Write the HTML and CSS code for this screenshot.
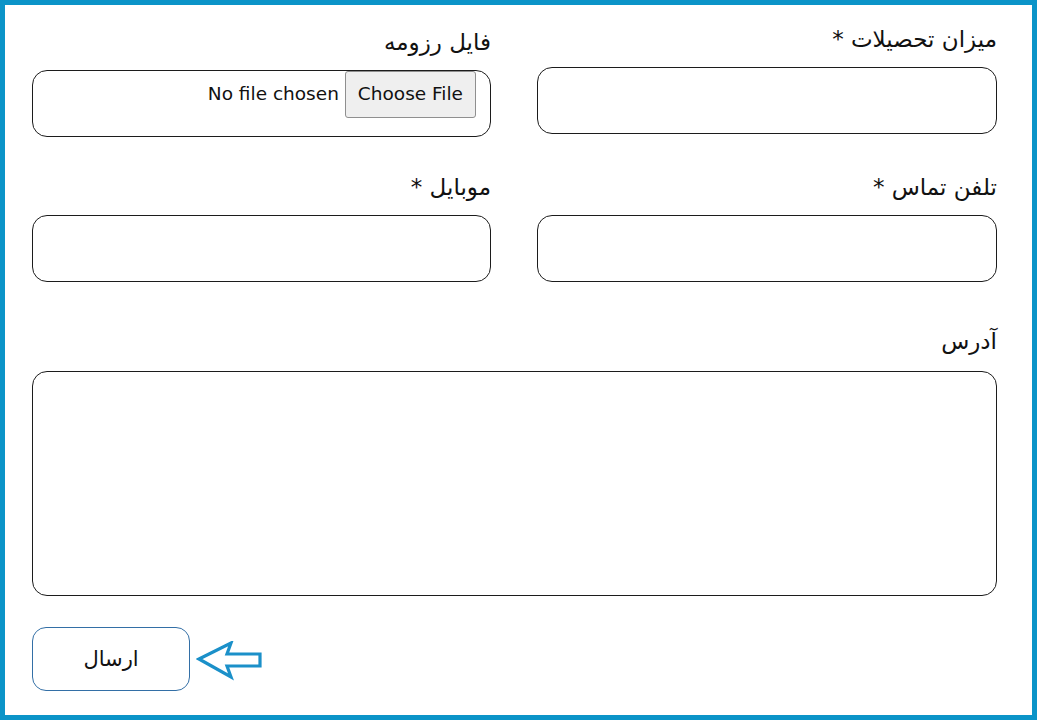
FILE: index.html
```html
<!DOCTYPE html>
<html lang="fa">
<head>
<meta charset="utf-8">
<title>فرم</title>
<link rel="stylesheet" href="styles.css">
</head>
<body>
<div class="frame">
  <form class="form" dir="rtl">
    <div class="grid">
      <div class="field">
        <label class="label">میزان تحصیلات *</label>
        <div class="input"></div>
      </div>
      <div class="field field-file">
        <label class="label">فایل رزومه</label>
        <div class="input file-input">
          <span class="file-btn">Choose File</span>
          <span class="file-name">No file chosen</span>
        </div>
      </div>
      <div class="field">
        <label class="label">تلفن تماس *</label>
        <div class="input"></div>
      </div>
      <div class="field">
        <label class="label">موبایل *</label>
        <div class="input"></div>
      </div>
    </div>
    <div class="field field-address">
      <label class="label">آدرس</label>
      <div class="input textarea"></div>
    </div>
    <div class="actions" dir="ltr">
      <button type="button" class="submit">ارسال</button>
      <svg class="arrow" width="68" height="40" viewBox="0 0 68 40">
        <path d="M3 18 L35 2 L31 13 L64 13 L64 25 L31 25 L35 36 Z" fill="#fff" stroke="#1b90c9" stroke-width="3.2" stroke-linejoin="miter"/>
      </svg>
    </div>
  </form>
</div>
</body>
</html>
```
FILE: styles.css
```css
html, body {
  margin: 0;
  padding: 0;
  background: #fff;
}
.frame {
  box-sizing: border-box;
  width: 1037px;
  height: 720px;
  border: 5px solid #0b94c8;
  background: #fff;
  font-family: "DejaVu Sans", sans-serif;
  color: #111;
}
.form {
  padding: 20px 35px 0 27px;
}
.grid {
  display: grid;
  grid-template-columns: 460px 459px;
  column-gap: 46px;
  row-gap: 39px;
}
.field {
  display: flex;
  flex-direction: column;
}
.field-file {
  margin-top: 3px;
  margin-bottom: -3px;
}
.label {
  font-size: 23px;
  line-height: 28px;
  height: 28px;
  margin-bottom: 14px;
  text-align: right;
}
.input {
  box-sizing: border-box;
  height: 67px;
  border: 1.3px solid #1c1c1c;
  border-radius: 15px;
  background: #fff;
}
.file-input {
  display: flex;
  align-items: flex-start;
  gap: 6px;
  padding: 0 14px;
}
.file-btn {
  box-sizing: border-box;
  height: 47px;
  padding: 0 12px 3px;
  display: flex;
  align-items: center;
  font-size: 18.5px;
  background: #efefef;
  border: 1px solid #8f8f8f;
  border-radius: 3px;
  color: #111;
  white-space: nowrap;
}
.file-name {
  box-sizing: border-box;
  height: 47px;
  padding-bottom: 3px;
  display: flex;
  align-items: center;
  font-size: 18.5px;
  color: #111;
  white-space: nowrap;
}
.field-address {
  margin-top: 45px;
}
.field-address .label {
  margin-bottom: 16px;
}
.textarea {
  height: 225px;
}
.actions {
  display: flex;
  align-items: center;
  gap: 6px;
  margin-top: 31px;
}
.submit {
  box-sizing: border-box;
  width: 158px;
  height: 64px;
  border: 1px solid #336fa6;
  border-radius: 14px;
  background: #fff;
  font-family: "DejaVu Sans", sans-serif;
  font-size: 21px;
  color: #111;
  padding: 0;
}
.arrow {
  display: block;
  margin-top: 4px;
}
```
